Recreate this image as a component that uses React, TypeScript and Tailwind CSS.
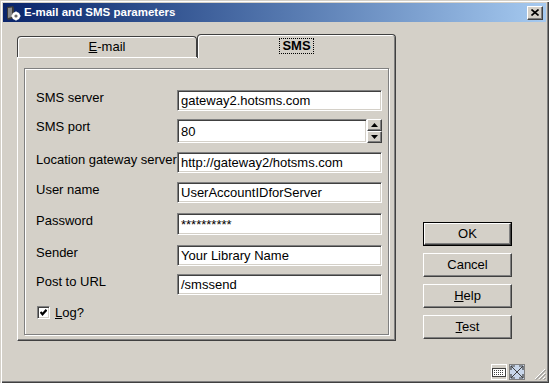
import React from "react";

const font = { fontFamily: '"Liberation Sans", Arial, sans-serif' };

function TitleIcon() {
  return (
    <svg width="16" height="16" viewBox="0 0 16 16">
      <path d="M2 2 L8 1 L9 3 L9 13 L3 15 L2 13 Z" fill="#3a3a3a" />
      <path d="M3 3 L7 2.5 L7 12 L3 13 Z" fill="#8a8a8a" />
      <circle cx="11" cy="11" r="4" fill="#ffffff" />
      <circle cx="11" cy="11" r="1.6" fill="#6a6a6a" />
      <path d="M11 6.5 V8 M11 14 V15.5 M6.5 11 H8 M14 11 H15.5" stroke="#ffffff" strokeWidth="1.5" />
    </svg>
  );
}

function TextBox({ value, h = "h-[21px]", w = "w-[205px]" }: { value: string; h?: string; w?: string }) {
  return (
    <div
      className={`${w} ${h} bg-white border border-t-[#808080] border-l-[#808080] border-r-white border-b-white shadow-[inset_1px_1px_0_#404040,inset_-1px_-1px_0_#d4d0c8] flex items-center pl-[3px] text-[13px] text-black leading-none`}
    >
      {value}
    </div>
  );
}

function Row({ label, children, mt }: { label: string; children: React.ReactNode; mt: string }) {
  return (
    <div className={`flex items-start ${mt}`}>
      <div className="w-[141px] text-[13px] leading-[15px] text-black whitespace-nowrap">{label}</div>
      {children}
    </div>
  );
}

function SpinArrow({ up }: { up?: boolean }) {
  return (
    <div className="h-[12px] w-[15px] bg-[#d4d0c8] border border-t-white border-l-white border-r-[#404040] border-b-[#404040] shadow-[inset_-1px_-1px_0_#808080] flex items-center justify-center">
      <svg width="7" height="4" viewBox="0 0 7 4">
        {up ? <path d="M3.5 0 L7 4 L0 4 Z" fill="#000" /> : <path d="M0 0 L7 0 L3.5 4 Z" fill="#000" />}
      </svg>
    </div>
  );
}

function Button({ children, primary }: { children: React.ReactNode; primary?: boolean }) {
  return (
    <div className={`w-[89px] h-[24px] ${primary ? "border border-black" : ""}`}>
      <div className="h-full w-full bg-[#d4d0c8] border border-t-white border-l-white border-r-[#404040] border-b-[#404040] shadow-[inset_-1px_-1px_0_#808080] flex items-center justify-center text-[13px] text-black">
        {children}
      </div>
    </div>
  );
}

export default function App() {
  return (
    <div
      style={font}
      className="w-[549px] h-[383px] bg-[#d4d0c8] p-[3px] flex flex-col shadow-[inset_1px_1px_0_#d4d0c8,inset_2px_2px_0_#ffffff,inset_-1px_-1px_0_#404040,inset_-2px_-2px_0_#808080] select-none"
    >
      {/* Title bar */}
      <div className="h-[19px] bg-gradient-to-r from-[#0a246a] to-[#a6caf0] flex items-center pl-[2px] pr-[3px]">
        <TitleIcon />
        <span className="ml-[3px] text-white font-bold text-[11.5px] leading-none">E-mail and SMS parameters</span>
        <div className="ml-auto w-[16px] h-[14px] bg-[#d4d0c8] border border-t-white border-l-white border-r-[#404040] border-b-[#404040] shadow-[inset_-1px_-1px_0_#808080] flex items-center justify-center">
          <svg width="8" height="7" viewBox="0 0 8 7">
            <path d="M0.5 0.5 L7.5 6.5 M7.5 0.5 L0.5 6.5" stroke="#000" strokeWidth="1.6" />
          </svg>
        </div>
      </div>

      {/* Content */}
      <div className="flex-1 flex">
        <div className="ml-[14px] mt-[12px] w-[379px]">
          {/* Tabs */}
          <div className="flex items-end h-[23px]">
            <div className="w-[180px] h-[21px] border border-b-0 border-[#404040] rounded-t-[4px] shadow-[inset_1px_1px_0_#ffffff] flex items-center justify-center text-[13px] text-black">
              <span>
                <span className="underline">E</span>-mail
              </span>
            </div>
            <div className="relative z-10 -mb-[1px] w-[199px] h-[24px] bg-[#d4d0c8] border border-b-0 border-[#404040] rounded-t-[4px] shadow-[inset_1px_1px_0_#ffffff,inset_-1px_0_0_#808080] flex items-center justify-center">
              <span className="font-bold text-[13px] text-black outline outline-1 outline-dotted outline-black px-[2px] leading-[14px] -mt-[2px]">
                SMS
              </span>
            </div>
          </div>
          {/* Panel */}
          <div className="h-[284px] border border-t-white border-l-white border-r-[#404040] border-b-[#404040] shadow-[inset_-1px_-1px_0_#808080] pt-[10px] pl-[6px]">
            <div className="w-[365px] h-[267px] border border-[#808080] shadow-[1px_1px_0_#ffffff,inset_1px_1px_0_#ffffff] pt-[21px] pl-[11px]">
              <Row label="SMS server" mt="">
                <TextBox value="gateway2.hotsms.com" />
              </Row>
              <Row label="SMS port" mt="mt-[8px]">
                <div className="flex">
                  <TextBox value="80" h="h-[24px]" w="w-[190px]" />
                  <div className="flex flex-col">
                    <SpinArrow up />
                    <SpinArrow />
                  </div>
                </div>
              </Row>
              <Row label="Location gateway server" mt="mt-[9px]">
                <TextBox value="http://gateway2/hotsms.com" />
              </Row>
              <Row label="User name" mt="mt-[9px]">
                <TextBox value="UserAccountIDforServer" />
              </Row>
              <Row label="Password" mt="mt-[10px]">
                <TextBox value="**********" h="h-[22px]" />
              </Row>
              <Row label="Sender" mt="mt-[10px]">
                <TextBox value="Your Library Name" />
              </Row>
              <Row label="Post to URL" mt="mt-[8px]">
                <TextBox value="/smssend" />
              </Row>
              <div className="flex items-center h-[15px] mt-[10px] pl-[1px]">
                <div className="w-[13px] h-[13px] bg-white border border-t-[#808080] border-l-[#808080] border-r-white border-b-white shadow-[inset_1px_1px_0_#404040,inset_-1px_-1px_0_#d4d0c8] flex items-center justify-center">
                  <svg width="7" height="7" viewBox="0 0 7 7">
                    <path d="M0.5 3 L2.5 5.3 L6.5 0.8" stroke="#000" strokeWidth="2.2" fill="none" />
                  </svg>
                </div>
                <span className="ml-[5px] text-[13px] text-black leading-[15px]">
                  <span className="underline">L</span>og?
                </span>
              </div>
            </div>
          </div>
        </div>

        {/* Buttons */}
        <div className="ml-[27px] mt-[200px] flex flex-col gap-[7px]">
          <Button primary>OK</Button>
          <Button>Cancel</Button>
          <Button>
            <span>
              <span className="underline">H</span>elp
            </span>
          </Button>
          <Button>
            <span>
              <span className="underline">T</span>est
            </span>
          </Button>
        </div>
      </div>

      {/* Status icons */}
      <div className="h-[17px] flex items-end justify-end">
        <svg width="16" height="16" viewBox="0 0 16 16">
          <rect x="0.5" y="0.5" width="15" height="15" fill="#d4d0c8" stroke="#ffffff" />
          <rect x="1.5" y="4.5" width="13" height="8" fill="#ffffff" stroke="#404040" />
          <path d="M3 6.5 H13 M3 8.5 H13 M3 10.5 H13" stroke="#404040" strokeDasharray="1 1" />
        </svg>
        <svg width="16" height="16" viewBox="0 0 16 16" className="ml-[2px]">
          <rect x="0.5" y="0.5" width="15" height="15" fill="#c8d6ea" stroke="#808080" />
          <path d="M2 2 L14 14 M14 2 L2 14" stroke="#404040" strokeWidth="1" />
          <path d="M2 2 H6 M2 2 V6 M14 2 H10 M14 2 V6 M2 14 H6 M2 14 V10 M14 14 H10 M14 14 V10" stroke="#404040" strokeWidth="1.2" />
        </svg>
        <svg width="12" height="12" viewBox="0 0 12 12" className="ml-[9px]">
          <path d="M11 1 L1 11 M11 5 L5 11 M11 9 L9 11" stroke="#ffffff" strokeWidth="1" />
          <path d="M11.8 1.8 L1.8 11.8 M11.8 5.8 L5.8 11.8 M11.8 9.8 L9.8 11.8" stroke="#808080" strokeWidth="1" />
        </svg>
      </div>
    </div>
  );
}
